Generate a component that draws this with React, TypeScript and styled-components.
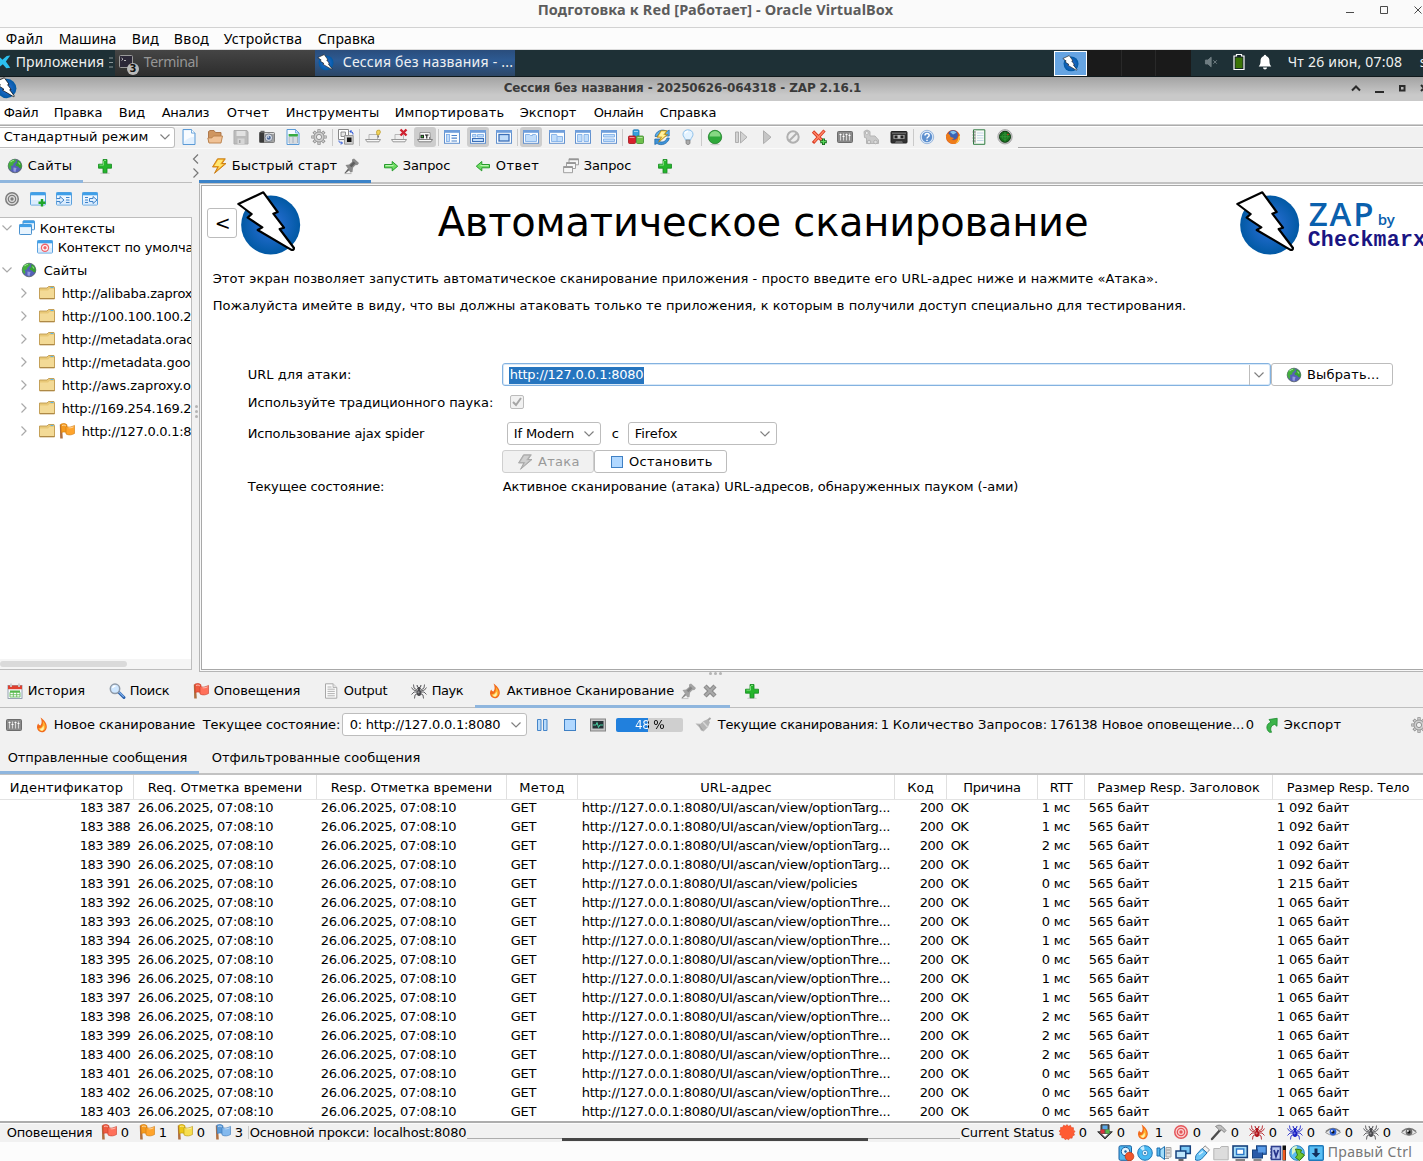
import React, { ReactNode, useLayoutEffect, useRef, useState } from "react";
import styled, { createGlobalStyle, css } from "styled-components";

const GlobalStyle = createGlobalStyle`
  * { box-sizing: border-box; }
  body { margin: 0; background: #f1f1f1; overflow: hidden; }
`;

const UI_FONT = '"DejaVu Sans", sans-serif';
const HOST_FONT = '"Noto Sans", "Open Sans", sans-serif';

/* ---------- text set to a fixed advance width ---------- */

const TextBox = styled.span<{ $w: number; $l: number; $size: number; $color: string; $bold?: boolean; $font: string; $weight?: number; $dy: number }>`
  display: block;
  flex: none;
  width: ${(p) => p.$w}px;
  margin-left: ${(p) => p.$l}px;
  padding-top: ${(p) => p.$dy}px;
  padding-left: 0.7px;
  font-family: ${(p) => p.$font};
  font-size: ${(p) => p.$size}px;
  font-weight: ${(p) => p.$weight ?? (p.$bold ? 700 : 400)};
  line-height: 1.2;
  color: ${(p) => p.$color};
  white-space: pre;
`;

type TProps = { w: number; l?: number; size?: number; color?: string; bold?: boolean; font?: string; weight?: number; dy?: number; children: string };

function T({ w, l = 0, size = 13, color = "#000", bold, font = UI_FONT, weight, dy = 0, children }: TProps) {
  const ref = useRef<HTMLSpanElement>(null);
  const [spacing, setSpacing] = useState(0);
  useLayoutEffect(() => {
    const el = ref.current;
    if (!el) return;
    el.style.letterSpacing = "0px";
    const natural = el.getBoundingClientRect().width;
    const next = children.length > 1 ? (w - 1.4 - natural) / children.length : 0;
    el.style.letterSpacing = `${next}px`;
    setSpacing(next);
  }, [w, children]);
  return (
    <TextBox $w={w} $l={l} $size={size} $color={color} $bold={bold} $font={font} $weight={weight} $dy={dy}>
      <span ref={ref} style={{ letterSpacing: spacing }}>{children}</span>
    </TextBox>
  );
}

/* ---------- icons ---------- */

const Svg = styled.svg<{ $l: number }>`
  display: block;
  flex: none;
  margin-left: ${(p) => p.$l}px;
  overflow: visible;
`;

const flag = (a: string, b: string, s: string) => (
  <>
    <path d="M.8 1.500h2L3.800 15.500H1.200z" fill="#b07040" />
    <path d="M1.800 1.200c2-1.200 4.500-1 6.200.6v8.200c-2-1.300-4-1.500-5.700-.2z" fill={a} stroke={s} strokeWidth=".6" />
    <path d="M7 3.200c2.500 1.500 5 1 8.500-.8v8.100c-2.500 1.600-6 2-8.500.5z" fill={b} stroke={s} strokeWidth=".6" />
    <path d="M3 2.600c1.500-.8 3-.5 4 .5M9.500 4.700c1.700.3 3.400 0 5-.8" stroke="#fff" strokeOpacity=".55" fill="none" />
  </>
);

const spider = (c: string) => (
  <>
    <g stroke={c} strokeWidth="1" fill="none" opacity=".85">
      <path d="M6 7L3 5 2.500 1.500M6 8L2.500 7 .5 4.500M6 9H3L.5 11.500M6.500 10.500L4 12l-.5 3.500M10 7l3-2 .5-3.500M10 8l3.500-1 2-2.500M10 9h3l2.500 2.500M9.500 10.500L12 12l.5 3.500" />
    </g>
    <ellipse cx="8" cy="9.800" rx="2.400" ry="3.100" fill={c} />
    <circle cx="8" cy="5.500" r="1.800" fill={c} />
    <path d="M6.500 4L6 2M9.500 4l.5-2" stroke={c} />
    <circle cx="7.500" cy="9.300" r="1.100" fill="#fff" opacity=".4" />
  </>
);

const eye = (c: string) => (
  <>
    <path d="M.5 8.500Q8 1 15.500 8.500 8 14 .5 8.500z" fill="#e6e6e6" stroke="#9a9a9a" />
    <path d="M.8 7.500Q8 1.300 15.200 7.500" stroke="#777" strokeWidth="1.100" fill="none" />
    <circle cx="8" cy="8" r="3.400" fill={c} />
    <circle cx="8" cy="8" r="1.500" fill="#111" />
    <circle cx="6.900" cy="6.900" r=".9" fill="#fff" />
  </>
);

const rings = (a: string, b: string) => (
  <>
    <circle cx="8" cy="8" r="7" fill={a} />
    <circle cx="8" cy="8" r="5.500" fill={b} />
    <circle cx="8" cy="8" r="4.300" fill={a} />
    <circle cx="8" cy="8" r="3" fill={b} />
    <circle cx="8" cy="8" r="1.700" fill={a} />
  </>
);

const frame = (inner: ReactNode) => (
  <>
    <rect x=".5" y="1.500" width="15" height="12.800" fill="#fafdff" stroke="#6391cd" />
    <rect x="0" y="1" width="16" height="2.800" fill="#6f9edb" />
    <g fill="#c1ddfa" stroke="#79a9e6" strokeWidth=".8">{inner}</g>
  </>
);

const win = (inner: ReactNode) => (
  <>
    <rect x=".5" y="1.500" width="15" height="12.500" rx=".8" fill="#eef7ff" stroke="#5aa1de" />
    <rect x=".5" y="1.500" width="15" height="2.800" fill="#3f9fe8" />
    <path d="M1 9h14v4.500H1z" fill="#cfe5fb" opacity=".6" />
    {inner}
  </>
);

const sliders = (
  <>
    <rect x=".5" y="2.500" width="15" height="11" rx="1" fill="#8a8a8a" stroke="#6c6c6c" />
    <path d="M3.500 4.500v7M6.500 4.500v7M9.500 4.500v7M12.500 4.500v7" stroke="#dcdcdc" strokeWidth=".9" />
    <path d="M2.500 5.500h2M5.500 7.500h2M8.500 5.500h2M11.500 6.500h2" stroke="#fff" strokeWidth="1.200" />
  </>
);

const gear = (
  <>
    <g stroke="#8c8c8c" strokeWidth="3.200">
      <path d="M8 .3v15.400M.3 8h15.400M2.600 2.600l10.800 10.800M13.400 2.600L2.600 13.400" />
    </g>
    <g stroke="#d0d0d0" strokeWidth="1.700">
      <path d="M8 1v14M1 8h14M3.200 3.200l9.600 9.600M12.800 3.200l-9.600 9.600" />
    </g>
    <circle cx="8" cy="8" r="5" fill="#cfcfcf" stroke="#8d8d8d" strokeWidth=".8" />
    <circle cx="8" cy="8" r="2.600" fill="#f1f1f1" stroke="#888" strokeWidth=".9" />
  </>
);

const globe = (
  <>
    <circle cx="8" cy="8" r="6.800" fill="#5560b8" stroke="#55606a" strokeWidth=".8" />
    <path d="M4 2.500C5.500 1.300 7.500 1.200 9 1.600L8.500 4 6.500 5.500 6 7.500 3.500 8 4.500 10l-.8 2.200C2 10.500 1.200 9 1.400 7 1.600 5 2.500 3.500 4 2.500z" fill="#43b03c" />
    <path d="M9.500 2.500l2.500.2c1.800 1.500 2.900 3.500 2.700 6-.4 1.300-1.200 2.100-2 1.600L11 8.500 9 8 8.500 6 10.500 5z" fill="#37a033" />
    <path d="M3.500 4c1-.9 2-1.500 3.500-1.800M11.500 4.500l1.500 2" stroke="#98e58a" strokeWidth="1.100" fill="none" />
    <path d="M6.500 9.500l3 .5-1 4-2-.8z" fill="#a4abe8" opacity=".8" />
  </>
);

const bolt = (a: string, b: string, s: string) => (
  <>
    <path d="M6.500.8h7.800L11 5.500h4L3.500 15.300 6.800 9H1.500z" fill={a} stroke={s} strokeWidth=".9" strokeLinejoin="round" />
    <path d="M7.200 1.800h5L9 6.300h3.500L6.500 11.500 8.500 8H3.300z" fill={b} />
  </>
);

const pin = (a: string, b: string) => (
  <>
    <path d="M1.500 15l4-5 1.500 1.500-4.500 3.700z" fill={b} />
    <path d="M2.500 7l3.500-.6 3-2.400V1.500L11 .5l5 4.500-1.500 2-2.200.2-2.300 2.600-.5 4.200-2 .5z" fill={a} />
    <path d="M6.500 7.500l4-4 2 1.700-4 4z" fill={b} />
    <path d="M1.500 15.600h7" stroke={b} opacity=".4" />
  </>
);

const flame = (
  <>
    <path d="M6.500.5c3 1.800 6.500 5.500 6.300 9.500-.2 3-2.200 5.300-5 5.300S3.200 13.300 3 10.600c-.1-1.600.5-3 1.300-4C4.800 8 5.500 8.500 6.500 8.500 8 6.500 8.100 3.500 6.500.5z" fill="#f26a1b" />
    <path d="M8.800 4c1.500 1.800 3 3.700 2.800 6.100-.2 2-1.600 3.900-3.600 3.900S4.700 12.800 4.500 11c1.500.4 3-.3 3.800-2.200.6-1.500.8-3 .5-4.800z" fill="#ffb02e" />
    <path d="M9.300 8.500c1 2 .8 5-1.200 5.200-1.800 0-2-1.500-2-2 1.500.2 2.700-1.200 3.200-3.200z" fill="#fff3b0" />
  </>
);

const plus = (
  <>
    <ellipse cx="8" cy="15.200" rx="5" ry=".8" fill="#999" opacity=".45" />
    <path d="M6 1.500h4v4.700h4.500v4H10v4.600H6v-4.600H1.500v-4H6z" fill="#25b52c" stroke="#128a1c" strokeWidth=".8" />
    <path d="M7 2.500h2M2.500 7.200h4V3" stroke="#8fe58a" strokeWidth=".8" fill="none" />
  </>
);

const arrow = (
  <>
    <path d="M1.500 6.500h7.700V3.500l5.500 4.700-5.500 4.700V9.800H1.500z" fill="#6ddc62" stroke="#279b2c" strokeLinejoin="round" />
    <path d="M2.500 7.600h8" stroke="#c5f7bd" />
  </>
);

const zapBolt = (
  <>
    <circle cx="807" cy="675" r="88.500" fill="url(#zapBall)" />
    <path d="M785 577L828 636 815 641 847 683 834 687 877 744Q877 752 868 749L768 690 782 682 738 653 750 642 710 612z" fill="#fff" stroke="#000" strokeWidth="6.500" strokeLinejoin="round" />
  </>
);

const hat = (
  <>
    <path d="M4 5.500h8.500v5H4z" fill="#eee" stroke="#aaa" strokeWidth=".8" />
    <path d="M.5 10.500h15l-1.500 2.300H2z" fill="#f7f7f7" stroke="#909090" strokeWidth=".9" />
  </>
);

const ICONS: Record<string, ReactNode> = {
  globe, gear, sliders, flame, plus, arrow,
  bolt: bolt("#f3a51c", "#ffe873", "#c77a10"),
  boltOff: bolt("#b5b5b5", "#d0d0d0", "#a5a5a5"),
  pin: pin("#8a8a8a", "#5f5f5f"),
  pinLight: pin("#a3a3a3", "#858585"),
  arrowLeft: <g transform="translate(16 0) scale(-1 1)">{arrow}</g>,
  doc: (
    <>
      <path d="M2 .5h8.500L14 4v11.500H2z" fill="#e2f0fe" stroke="#5b9ad6" />
      <path d="M3 1.500h7v3.500h3V8C9 8 5 10 3 13z" fill="#fff" opacity=".8" />
      <path d="M10.500.5V4H14" fill="#fff" stroke="#5b9ad6" strokeWidth=".8" />
    </>
  ),
  open: (
    <>
      <path d="M1.500 13V2.500L3 1.500h4l1.500 2H14V9z" fill="#cf9660" stroke="#a97142" strokeWidth=".9" />
      <path d="M.8 9L5 8.800 6.500 7h9L14 14H2z" fill="#f0c296" stroke="#b9804a" strokeWidth=".9" />
    </>
  ),
  save: (
    <>
      <path d="M1 1.500h13L15 3v12H1z" fill="#bcbcbc" stroke="#adadad" />
      <path d="M3.500 2h9v5h-9z" fill="#e2e2e2" />
      <path d="M4.500 9.500h7V15h-7z" fill="#d6d6d6" />
      <path d="M6 11h1.500v3H6z" fill="#a5a5a5" />
    </>
  ),
  camera: (
    <>
      <rect x=".5" y="3.500" width="15" height="10" rx="1" fill="#a3a3a3" stroke="#808080" />
      <path d="M.5 3h4.500v10.500H.5z" fill="#3a3a3a" />
      <rect x="1.500" y="1.800" width="4" height="2" fill="#666" />
      <path d="M6 4.500h9" stroke="#ddd" />
      <circle cx="9.800" cy="8.700" r="3.800" fill="#d5d9e2" stroke="#6b7380" strokeWidth=".8" />
      <circle cx="9.800" cy="8.700" r="2" fill="#4c6a9c" />
      <circle cx="9.200" cy="8" r=".8" fill="#fff" />
    </>
  ),
  sheet: (
    <>
      <path d="M2 .5h8.500L14 4v11.500H2z" fill="#f5faff" stroke="#5b9ad6" />
      <path d="M10.500.5V4H14z" fill="#cfe4f8" stroke="#5b9ad6" strokeWidth=".7" />
      <path d="M4 8h8.500v6H4zM4 10h8.500M4 12h8.500M8 8v6" fill="#fff" stroke="#9aa6b4" strokeWidth=".8" />
      <path d="M3.600 5h9.300v2.500H3.600z" fill="#39ab42" />
    </>
  ),
  swap: (
    <>
      <path d="M.5.500h10v10h-10z" fill="#fff" stroke="#888" />
      <path d="M3 3h4.500v4.500H3z" fill="#e6e6e6" stroke="#777" strokeWidth=".8" />
      <path d="M6.500 6.500h8.700v8.700H6.500z" fill="#cfcfcf" stroke="#999" />
      <path d="M9 8.500h4.500V13H9z" fill="#111" />
      <path d="M12 2.500c2 0 3 .5 3 3M12 2.500l1.500-1.500M12 2.500L13.500 4M1 11.500c0 2 1 2.500 3 2.500M4.500 14L3 12.500M4.500 14L3 15.500" stroke="#2a55d8" fill="none" />
    </>
  ),
  hatTip: (<>{hat}<path d="M12 1.500l2.500-.5 1 2-1.500 3h-2L11.500 3z" fill="#f1d35a" stroke="#b99621" strokeWidth=".7" /><path d="M12.500 6.500h1.500v2h-1.500z" fill="#777" /></>),
  hatX: (<>{hat}<path d="M9.500.5l6 6M15.500.5l-6 6" stroke="#cf2230" strokeWidth="2.400" /></>),
  hatOt: (
    <>
      <path d="M3 3.500h10l.5 7h-11z" fill="#fafafa" stroke="#888" strokeWidth=".8" />
      <path d="M.5 10.500h15l-1.500 2.300H2z" fill="#f7f7f7" stroke="#808080" />
      <rect x="3.500" y="5.800" width="3.500" height="3.500" fill="#222" />
      <rect x="4.500" y="6.800" width="1.500" height="1.500" fill="#39c03b" />
      <path d="M8 6h3.500M9.800 6v3.500M12 9h1" stroke="#111" strokeWidth="1.100" />
    </>
  ),
  lay1: frame(<><rect x="2.500" y="5.500" width="3" height="7" /><path d="M7.500 6.500H13M7.500 9.200H13M7.500 12H13" stroke="#4d83c9" strokeWidth="1.200" /></>),
  lay2: frame(<><path d="M2.500 5.500h3.500v2.500H2.500zM7.500 5.500h6v2.500h-6z" /><path d="M2.500 9.500h11v3h-11z" stroke="#3b6fb8" strokeWidth="1.100" /></>),
  lay3: frame(<rect x="3" y="5.500" width="10" height="6.500" stroke="#3b6fb8" strokeWidth="1.300" />),
  lay4: frame(<path d="M2.500 5.500h4l1 1h2v-1h3l1 1v6h-11z" />),
  lay5: frame(<path d="M2.500 5.500h5l.8 2h5.200v5h-11zM8 7.500v5" />),
  lay6: frame(<path d="M2.500 5.500h4.500v7H2.500zM9 5.500h4.500v7H9z" />),
  lay7: frame(<path d="M2.500 5.500h11v2.500h-11zM2.500 10h11v2.500h-11z" />),
  blocks: (
    <>
      <rect x="5" y=".8" width="6" height="6.500" rx="1" fill="#35a0dd" stroke="#1f79b2" strokeWidth=".8" />
      <rect x=".5" y="7" width="7" height="7.500" rx="1" fill="#d8202b" stroke="#9f1219" strokeWidth=".8" />
      <rect x="8.500" y="7" width="7" height="7.500" rx="1" fill="#6dc04b" stroke="#3c8a2a" strokeWidth=".8" />
      <path d="M6 2.500h4M1.500 8.500h5M9.500 8.500h5" stroke="#fff" opacity=".5" />
    </>
  ),
  update: (
    <>
      <path d="M3 14.500L.8 15.500V10H6l-1.500 2c3 2 7 1 8.500-3h2.300c-1 5.500-7.500 8.500-12.300 5.500z" fill="#3d93d8" stroke="#1c64a5" strokeWidth=".7" />
      <path d="M13 2.500l2.200-1.500v6H10l2-2C9 2.500 5 3.500 3.500 7.500H1C1.500 2.500 8-1 13 2.500z" fill="#5aaee8" stroke="#1c64a5" strokeWidth=".7" />
      <g transform="translate(1.800 1) scale(.8)">{bolt("#efc53a", "#fff1a0", "#a88018")}</g>
    </>
  ),
  bulb: (
    <>
      <path d="M8 .8c3 0 5 2 5 4.500 0 2.300-1.800 3.300-2.500 5.700h-5C4.800 8.600 3 7.600 3 5.300 3 2.800 5 .8 8 .8z" fill="#e4f3ff" stroke="#8dc0ea" />
      <path d="M5 4.500C5.500 3 6.500 2.200 8 2.200" stroke="#fff" strokeWidth="1.500" fill="none" />
      <path d="M6 11h4v3.500L8 15.800l-2-1.300z" fill="#aaa" stroke="#777" strokeWidth=".7" />
    </>
  ),
  ball: (
    <>
      <circle cx="8" cy="8" r="6.700" fill="#2fa93a" stroke="#1f7d29" strokeWidth=".8" />
      <path d="M2.500 7.500a5.500 5.500 0 0 1 11 0z" fill="#86d883" />
      <ellipse cx="8" cy="15.500" rx="5" ry=".7" fill="#999" opacity=".4" />
    </>
  ),
  step: <path d="M2.500 3v10.500h3V3zM7.500 2.500v11.500L14 8.200z" fill="#d2d2d2" stroke="#a8a8a8" strokeWidth=".9" />,
  play: <path d="M4.500 1.800v12.800L12 8.200z" fill="#c6c6c6" stroke="#a8a8a8" strokeWidth=".9" />,
  ban: (<><circle cx="8" cy="8" r="5.700" fill="#eee" stroke="#b0b0b0" strokeWidth="2" /><path d="M4 12l8-8" stroke="#b0b0b0" strokeWidth="2" /></>),
  redX: (
    <>
      <path d="M2 2.500l11 11M13.500 1.500L2 14" stroke="#d8391f" strokeWidth="3.200" />
      <path d="M2.500 3l10 10M13 2L3 13" stroke="#ff8468" strokeWidth="1.500" />
      <path d="M12.500 9.500v6.500M9.300 12.700h6.500" stroke="#14691b" strokeWidth="3" />
      <path d="M12.500 10.200v5M10 12.700h5" stroke="#58d75a" strokeWidth="1.200" />
    </>
  ),
  turtle: (
    <>
      <path d="M1 2.500q3-3 6 0v4.500h5l3.500 4v3.500h-12V9l-2-.5z" fill="#cacaca" stroke="#b5b5b5" />
      <circle cx="3.800" cy="4" r="1.500" fill="#efefef" stroke="#aaa" strokeWidth=".7" />
      <circle cx="6" cy="13" r="1.800" fill="#ddd" stroke="#aaa" strokeWidth=".8" />
      <circle cx="12.500" cy="13" r="1.800" fill="#ddd" stroke="#aaa" strokeWidth=".8" />
    </>
  ),
  cassette: (
    <>
      <rect x="0" y="2.500" width="16" height="11.500" rx=".8" fill="#333" stroke="#222" />
      <path d="M1 4.200h14" stroke="#8a8a8a" strokeWidth=".8" />
      <rect x="2.500" y="6" width="11" height="3.800" fill="#bdbdbd" />
      <rect x="3.500" y="6.500" width="3" height="2.800" fill="#222" /><rect x="9.500" y="6.500" width="3" height="2.800" fill="#222" />
      <path d="M4 14l1-2h6l1 2z" fill="#666" />
    </>
  ),
  help: (
    <>
      <circle cx="8" cy="8" r="6.700" fill="#dce9f8" stroke="#86aad6" strokeWidth=".8" />
      <circle cx="8" cy="8" r="5.200" fill="#5e90cf" />
      <path d="M6 6.500c0-2.800 4.200-2.600 4.200-.2C10.200 8 8 8 8 9.500M8 10.700v1.400" stroke="#fff" strokeWidth="1.500" fill="none" />
    </>
  ),
  firefox: (
    <>
      <circle cx="8" cy="8" r="7" fill="#d9541b" />
      <circle cx="8" cy="6" r="4.800" fill="#3a62b4" />
      <path d="M5 3c2-1.500 5-1.300 6.500.8L8 5.500z" fill="#86c4ee" />
      <path d="M.9 6c0 5 3.500 9 8 9 3.800-.4 6.300-3.500 6.100-8.500l-1.500-2.800.2 3.800C12.500 10.500 9 12.500 6 10.500c1.500 0 2.500-.6 2.800-1.600L5.500 8 5 6 3 4.500z" fill="#ee7d1b" />
      <path d="M15 6.500c.3 4-1.500 7-4.500 8 2-2 3-4 3-7z" fill="#ffd24a" />
    </>
  ),
  notebook: (
    <>
      <path d="M2.500.8h11.300v14.500H2.500z" fill="#f8faf8" stroke="#2f7d42" />
      <path d="M3 1.500h2v13H3z" fill="#cbd3cb" />
      <path d="M1.500 3h3M1.500 6h3M1.500 9h3M1.500 12h3" stroke="#666" strokeWidth=".8" />
      <path d="M6 4h6.500M6 6.500h6.500M6 9h6.500M6 11.500h6.500" stroke="#b8cfe2" strokeWidth=".8" />
    </>
  ),
  radar: (
    <>
      <circle cx="8" cy="7.800" r="7.200" fill="#c6c6c6" stroke="#9a9a9a" strokeWidth=".8" />
      <circle cx="8" cy="7.800" r="5.500" fill="#15701c" stroke="#0f3a12" />
      <path d="M8 3v9.600M3.200 7.800h9.600" stroke="#3aa043" strokeWidth=".8" />
      <circle cx="8" cy="7.800" r="2.800" fill="none" stroke="#2f9137" strokeWidth=".8" />
      <circle cx="11" cy="5.500" r=".8" fill="#e22" />
    </>
  ),
  target: rings("#7c7c7c", "#e0e0e0"),
  targetRed: rings("#e4555a", "#fbd6d4"),
  winAdd: win(<path d="M12 8v7.500M8.500 11.800h7" stroke="#1fa529" strokeWidth="2.400" />),
  winIn: win(<path d="M.5 7.500h3.500V5.500L8 9l-4 3.500v-2H.5M10 6.500h3.500M10 9h3.500M10 11.500h3.500" stroke="#4083c8" fill="#dff0ff" />),
  winOut: win(<path d="M3 6.500h3M3 9h3M3 11.500h3M7.500 7.500H11V5.500L15 9l-4 3.500v-2H7.500z" stroke="#4083c8" fill="#dff0ff" />),
  winTarget: win(<><circle cx="8" cy="8.800" r="4.200" fill="#f0656a" /><circle cx="8" cy="8.800" r="2.900" fill="#fff" /><circle cx="8" cy="8.800" r="1.700" fill="#f0656a" /></>),
  contexts: (
    <>
      <rect x="4" y=".8" width="11.500" height="9" rx=".7" fill="#e8f4fe" stroke="#4b92cf" />
      <rect x="4" y=".8" width="11.500" height="2.400" fill="#3f9fe8" />
      <rect x=".5" y="4.500" width="12" height="10" rx=".7" fill="#e8f4fe" stroke="#4b92cf" />
      <rect x=".5" y="4.500" width="12" height="2.600" fill="#3f9fe8" />
    </>
  ),
  folder: (
    <>
      <path d="M.5 3H8l1.500-1.500H15l.5 1v11.300H.5z" fill="#e8c877" stroke="#c09a4e" strokeWidth=".9" />
      <path d="M1 5.500h8l1.500-1.500H15v9.300H1z" fill="#f3da96" />
      <path d="M11.500 2.500h3" stroke="#5bb5e8" />
      <path d="M1 13.600h14.500" stroke="#a98442" />
    </>
  ),
  flagRed: flag("#ef5a40", "#ff705a", "#c93c28"),
  flagOrange: flag("#f59a1e", "#ffa42c", "#d07a0c"),
  flagYellow: flag("#ecc718", "#f7de4e", "#b8940a"),
  flagBlue: flag("#5b9bd8", "#83b9ee", "#3a77b8"),
  calendar: (
    <>
      <rect x="1" y="2.500" width="14" height="13" fill="#f4f8fb" stroke="#8090a0" strokeWidth=".8" />
      <path d="M1 2.500h14v3.700H1z" fill="#e0402f" />
      <path d="M4 .5v3.500M12 .5v3.500" stroke="#ccc" strokeWidth="1.800" />
      <path d="M3 9.300h10v4.700H3zM3 11.700h10M6.300 9.300V14M9.700 9.300V14" fill="#fff" stroke="#55b84c" strokeWidth=".8" />
      <path d="M3 7.500h10v1.800H3z" fill="#55b84c" />
    </>
  ),
  search: (
    <>
      <path d="M9 8.500l6 6" stroke="#2c62ad" strokeWidth="3" strokeLinecap="round" />
      <path d="M10 9l4.800 4.800" stroke="#7fb0ea" strokeWidth="1.200" />
      <circle cx="6" cy="5.800" r="4.700" fill="#cfe7ff" stroke="#8f9aa8" strokeWidth="1.500" />
      <path d="M3.500 5C4 3.500 5 3 6.500 3" stroke="#fff" strokeWidth="1.300" fill="none" />
    </>
  ),
  output: (
    <>
      <path d="M2.500.8H10L13.800 4.500v10.700H2.500z" fill="#fafafa" stroke="#a8a8a8" />
      <path d="M10 .8v3.700h3.800" fill="#e3e3e3" stroke="#a8a8a8" strokeWidth=".8" />
      <path d="M4.500 4h4M4.500 6.200h7.300M4.500 8.400h7.300M4.500 10.600h7.300M4.500 12.800h7.300" stroke="#aaa" strokeWidth=".9" />
    </>
  ),
  spider: spider("#4a4a4e"),
  spiderRed: spider("#b2141b"),
  spiderBlue: spider("#1b22c5"),
  eyeBlue: eye("#2f62d8"),
  eyeGrey: eye("#6b6b6b"),
  stack: (
    <g fill="#f6f6f6" stroke="#979797" strokeWidth=".9">
      <path d="M6 .8h9.500v6H6z" /><path d="M3.500 4.500h9v6h-9z" /><path d="M.6 8.500h8.900v6.200H.6z" />
      <path d="M.6 9.300h9M3.500 5.300h9M6 1.600h9.500" strokeWidth="1.500" />
    </g>
  ),
  closeX: (
    <>
      <path d="M3 3l10 10M13 3L3 13" stroke="#8a8a8a" strokeWidth="4.400" />
      <path d="M3.500 3.500l9 9M12.500 3.500l-9 9" stroke="#a9a9a9" strokeWidth="2.200" />
    </>
  ),
  pause: <path d="M3.500 2.500H7v11H3.500zM9.500 2.500H13v11H9.500z" fill="#b8dbfb" stroke="#4585c9" />,
  stop: <rect x="2.500" y="2.500" width="11" height="11" fill="#b1d8ff" stroke="#3f80c4" />,
  monitor: (
    <>
      <rect x=".5" y="2" width="15" height="12" fill="#c4c4c4" stroke="#858585" />
      <rect x="2.500" y="4" width="11" height="7.500" fill="#253236" />
      <path d="M3 8h3l1-2.500 1.500 5L9.800 8H13" stroke="#4fe3b0" strokeWidth=".9" fill="none" />
    </>
  ),
  broom: (
    <>
      <path d="M15.500 1l-4 3.500" stroke="#a5a5a5" strokeWidth="2" />
      <path d="M.5 6.500l5 .3 3-2.800 3.500-1.500 3 2.500-2 5L8.500 14.500 6 13.500 4 10z" fill="#b5b5b5" />
      <path d="M8 5l4.500 5" stroke="#d8d8d8" strokeWidth="1.500" />
      <path d="M4 8l3.500 5" stroke="#9d9d9d" />
    </>
  ),
  exportUp: <path d="M5.500 15.300C1.500 12.500 2 6.500 7 5.200L5 2.500l8.200-1.200-.2 8-2.300-1.900c-3.500 1-5 3.600-3.200 7.900z" fill="#3cb44a" stroke="#1d8a30" strokeWidth=".8" />,
  badge: <path d="M8 .6l1.500 1.700 2-1 .8 2.200 2.200.2-.1 2.200 1.700 1.500-1.400 1.700.8 2-2 .9-.4 2.200-2.200-.1-1.300 1.700L8 14.700l-1.800 1-1.200-1.800-2.200-.1-.2-2.200-2-.9.800-2L.1 7l1.600-1.400L1.500 3.500l2.200-.2.900-2.100 2 .9z" fill="#ff5b33" stroke="#d93a16" strokeWidth=".5" />,
  down: (
    <>
      <path d="M4 .8h8v7h3.300L8 15 .7 7.800H4z" fill="#555" stroke="#333" />
      <rect x="5.500" y="1.500" width="5" height="3.700" fill="#58a7e8" />
      <path d="M3.500 5.500h4V9.500h-4z" fill="#d9343d" />
      <path d="M8.500 5.500h4v4h-4z" fill="#57b84a" />
      <path d="M5 10h6L8 13z" fill="#fff" />
    </>
  ),
  hammer: (
    <>
      <path d="M1 15L10 5" stroke="#4d4d4d" strokeWidth="2.400" strokeLinecap="round" />
      <path d="M4.500 2.500C7 .5 9.500 1 11 2.300l4 4.200-1.800 2-2.700-2.700L8.500 6.500 7 4.500z" fill="#bdbdbd" stroke="#777" strokeWidth=".8" />
    </>
  ),
  hdd: (
    <>
      <rect x="1" y=".8" width="12.500" height="14.500" rx="1.500" fill="#4fb8f0" stroke="#1a5f9f" />
      <circle cx="7.500" cy="6.500" r="4.200" fill="#e3f5ff" stroke="#1a5f9f" />
      <circle cx="7.500" cy="6.500" r="1.200" fill="#1a5f9f" />
      <circle cx="11.500" cy="11.500" r="4.300" fill="#f0552c" stroke="#b63410" strokeWidth=".7" />
    </>
  ),
  disc: (
    <>
      <circle cx="8" cy="8" r="7.300" fill="#48b9f2" stroke="#2176b5" />
      <path d="M8 8L3 3a7 7 0 0 1 4-2z" fill="#c9edff" />
      <circle cx="8" cy="8" r="2.800" fill="#e8f7ff" stroke="#2176b5" strokeWidth=".7" />
      <circle cx="8" cy="8" r="1.100" fill="#2176b5" />
    </>
  ),
  audio: (
    <>
      <path d="M1 3h3v8H1z" fill="#57b7ec" stroke="#1d6fae" />
      <path d="M4 5l4.500-3.500v13L4 11z" fill="#a3ddfa" stroke="#1d6fae" />
      <path d="M10 2.500h5V12h-5z" fill="#dedede" stroke="#a5a5a5" />
      <path d="M10.500 5H14M10.500 8H14M9 13.500h4" stroke="#999" />
    </>
  ),
  net: (
    <>
      <rect x="5.500" y="1" width="9.800" height="7.500" fill="#7ac8f5" stroke="#17427e" strokeWidth="1.500" />
      <rect x="1" y="6" width="9.800" height="7" fill="#bfe6fc" stroke="#17427e" strokeWidth="1.500" />
      <path d="M3.500 15h5" stroke="#333" strokeWidth="1.500" />
    </>
  ),
  usb: (
    <>
      <path d="M11 .8l4.500 4-2.500 3-4.500-4z" fill="#f1f1f1" stroke="#777" strokeWidth=".8" />
      <path d="M8 3.500l5 4.500-5.500 6c-2 1.500-4 1.500-6 1 0-2 0-4 1-5.500z" fill="#6cc6f6" stroke="#1f72b3" />
      <path d="M5 9.500l4-3" stroke="#d9f1ff" strokeWidth="1.500" />
    </>
  ),
  shared: <path d="M.8 3.500h6l1.500-2h6.900v13.300H.8z" fill="#dcdcdc" stroke="#b5b5b5" />,
  display: (
    <>
      <rect x="1" y="1" width="14.300" height="11.500" fill="#a8def9" stroke="#17427e" strokeWidth="1.600" />
      <rect x="4.500" y="4" width="7.300" height="5.500" fill="#fff" stroke="#2a77c9" strokeWidth="1.400" />
      <path d="M3.500 15h9.500" stroke="#666" strokeWidth="1.600" />
    </>
  ),
  displays: (
    <>
      <rect x="5.500" y=".8" width="9.800" height="8.500" fill="#3572c2" stroke="#17427e" />
      <rect x="1.500" y="5" width="10" height="8" fill="#2a5aa8" stroke="#17427e" />
      <path d="M7 2h7.500v5.500H7z" fill="#5b9de8" />
      <path d="M2.500 15h8" stroke="#666" strokeWidth="1.500" />
    </>
  ),
  cpu: (
    <>
      <rect x="1.500" y="1.500" width="9" height="13" fill="#b9c7f0" stroke="#30408f" strokeWidth="1.600" />
      <path d="M4 5l2 6.500L8.300 5" stroke="#27348b" strokeWidth="1.800" fill="none" />
      <path d="M0 4h1M0 7h1M0 10h1M0 13h1" stroke="#30408f" />
      <rect x="12.500" y=".5" width="3.500" height="15" fill="#111" />
      <rect x="13" y="5" width="2.500" height="10" fill="#f25a1f" />
    </>
  ),
  sync: (
    <>
      <circle cx="8" cy="8" r="7.300" fill="#5bbcf0" stroke="#2c7fb8" />
      <path d="M3 3c2-2 5-2 5-2l-1 5-4 4z" fill="#d8f4c9" />
      <path d="M6.500 4l6 1-1 2.500 4 2.500-5 5.500-4-3 2-2.500z" fill="#6fc52e" stroke="#33790f" />
    </>
  ),
  keyDown: (
    <>
      <rect x=".8" y=".8" width="14.500" height="14.500" rx="1" fill="#58bff5" stroke="#1f79ba" strokeWidth="1.400" />
      <path d="M6.500 3.500h3V8h2.800L8 12.500 3.700 8h2.800z" fill="#12305e" />
    </>
  ),
  xfce: <path d="M0 2c2 0 3.500 1.500 5 3.500L10 1l4-.5-5 7 5 7-4.500.5-4-4.500L0 15V10l2-2-2-2.500z" fill="#2cc0f0" />,
  terminal: (
    <>
      <rect x=".5" y="1.500" width="13" height="12" rx="1" fill="#2c2838" stroke="#9a9a9a" />
      <path d="M2.500 4l1.500 1.200L2.500 6.500M5 6.500h2" stroke="#ddd" strokeWidth=".8" fill="none" />
    </>
  ),
  volume: <path d="M.5 5.800h2.800L7 2.500v11L3.300 10.200H.5zM9.500 6l4 4M13.500 6l-4 4" fill="#6f7d82" stroke="#6f7d82" strokeWidth="1.100" />,
  battery: (<><path d="M5.500.5h5V2H13v13.500H3V2h2.500z" fill="#142227" stroke="#fff" strokeWidth="1.200" /><rect x="4.500" y="3.600" width="7" height="10.500" fill="#3b7407" /></>),
  bell: <path d="M8 .8c1 0 1.200.8 1.200 1.300C12 3 12.500 5 12.500 8c0 2 .8 3.200 1.800 4.500H1.700C2.700 11.200 3.500 10 3.500 8c0-3 .5-5 3.300-5.900C6.800 1.600 7 .8 8 .8zM6 13.500h4c0 2.500-4 2.500-4 0z" fill="#fff" />,
};

function Icon({ n, l = 0, s = 16 }: { n: string; l?: number; s?: number }) {
  return <Svg $l={l} width={s} height={s} viewBox="0 0 16 16">{ICONS[n]}</Svg>;
}

function ZapLogo({ w, l = 0 }: { w: number; l?: number }) {
  return (
    <Svg $l={l} width={w} height={(w * 198) / 201} viewBox="700 570 201 198">
      <defs>
        <radialGradient id="zapBall"><stop offset="0" stopColor="#2f72dc" /><stop offset="1" stopColor="#0159a4" /></radialGradient>
      </defs>
      {zapBolt}
    </Svg>
  );
}

function Chevron({ dir = "down", l = 0, color = "#808080" }: { dir?: "down" | "right" | "left"; l?: number; color?: string }) {
  const d = dir === "down" ? "M.5 2.500L5 7l4.500-4.500" : dir === "right" ? "M2.500.5L7 5l-4.500 4.500" : "M7 .5L2.500 5 7 9.500";
  return <Svg $l={l} width="10" height="10" viewBox="0 0 10 10"><path d={d} fill="none" stroke={color} strokeWidth="1.200" /></Svg>;
}

/* ---------- layout parts ---------- */

const Screen = styled.div`
  width: 1423px; height: 1161px; overflow: hidden;
  display: flex; flex-direction: column; background: #f1f1f1;
`;
const Bar = styled.div<{ $h: number; $bg?: string; $pb?: number }>`
  flex: none; display: flex; align-items: center; overflow: hidden;
  height: ${(p) => p.$h}px; background: ${(p) => p.$bg ?? "transparent"}; padding-bottom: ${(p) => p.$pb ?? 0}px;
`;
const HostTitle = styled(Bar)`border-bottom: 1px solid #d2d2d2; padding-bottom: 8px;`;
const HostMenu = styled(Bar)`border-bottom: 1px solid #dcdcdc; padding-top: 1px;`;
const Panel = styled(Bar)`border-bottom: 1px solid #10191c; align-items: stretch;`;
const PanelPart = styled.div<{ $w: number; $bg?: string }>`
  flex: none; display: flex; align-items: center; position: relative; padding-bottom: 2px;
  width: ${(p) => p.$w}px; background: ${(p) => p.$bg ?? "transparent"};
`;
const TaskCount = styled.span`
  position: absolute; left: 12px; top: 13px; width: 12px; height: 12px; border-radius: 50%;
  background: #b9b9b9; color: #111; font: bold 10px/12px ${UI_FONT}; text-align: center;
`;
const PagerCurrent = styled(PanelPart)`border: 1px solid #fff; justify-content: center; margin-top: 1px; height: 25px; padding: 0;`;
const PagerCell = styled(PanelPart)`border-right: 1px solid #292929;`;
const WindowTitle = styled(Bar)`background: linear-gradient(#a3a3a3, #c9c9c9 75%); padding-bottom: 2px;`;
const MenuBar = styled(Bar)`border-bottom: 1px solid #cfcfcf;`;
const ToolbarRow = styled(Bar)`border-top: 1px solid #acacac; box-shadow: inset 0 1px #fff, inset 0 -1px #fafafa; padding-bottom: 1px;`;
const ToolbarTail = styled.div`flex: 1; align-self: stretch; border-bottom: 1px solid #a6a6a6;`;
const Combo = styled.div<{ $w: number; $h?: number; $l?: number }>`
  flex: none; display: flex; align-items: center; background: #fff;
  width: ${(p) => p.$w}px; height: ${(p) => p.$h ?? 23}px; margin-left: ${(p) => p.$l ?? 0}px;
  border: 1px solid #bdbdbd; border-radius: 3px;
`;
const ModeCombo = styled(Combo)`border-left: 0; border-radius: 0 3px 3px 0; margin-right: 1px;`;
const ToolCell = styled.div<{ $w?: number; $on?: boolean }>`
  flex: none; display: flex; justify-content: center; align-items: center;
  width: ${(p) => (p.$w ?? 26) - 4}px; height: 20px; margin: 0 2px; border-radius: 3px;
  background: ${(p) => (p.$on ? "#cdcdcd" : "transparent")};
`;
const Divider = styled.div<{ $h?: number; $l?: number }>`
  flex: none; width: 1px; height: ${(p) => p.$h ?? 17}px; margin-left: ${(p) => p.$l ?? 0}px; background: #cacaca;
`;
const Workspace = styled.div`flex: none; display: flex; height: 523px;`;
const Sidebar = styled.div`flex: none; width: 192px; display: flex; flex-direction: column;`;
const TabBar = styled.div<{ $h: number }>`
  flex: none; display: flex; align-items: stretch; height: ${(p) => p.$h}px;
  box-shadow: inset 0 -1px #bebebe;
`;
const ThickTabBar = styled(TabBar)`box-shadow: inset 0 -2px #c2c2c2; padding-bottom: 1px;`;
const Tab = styled.div<{ $w: number; $mark?: string; $pb?: number }>`
  flex: none; display: flex; align-items: center; width: ${(p) => p.$w}px; padding-bottom: ${(p) => p.$pb ?? 0}px;
  ${(p) => p.$mark && css`box-shadow: inset 0 -3px ${p.$mark};`}
`;
const Tree = styled.div`
  flex: none; height: 453px; background: #fff; border: 1px solid #bdbdbd; border-left: 0;
  display: flex; flex-direction: column; overflow: hidden;
`;
const TreeRow = styled.div<{ $h?: number; $gap?: number }>`
  flex: none; display: flex; align-items: center; overflow: hidden;
  height: ${(p) => p.$h ?? 23}px; margin-top: ${(p) => p.$gap ?? 0}px;
  > svg { margin-top: -1px; }
`;
const ScrollTrack = styled.div`margin-top: auto; height: 10px; padding: 2px 0; background: #f5f5f5;`;
const ScrollThumb = styled.div`width: 127px; height: 6px; border-radius: 3px; background: #dadada;`;
const Splitter = styled.div`flex: none; width: 7px; display: flex; flex-direction: column; align-items: center;`;
const SplitArrows = styled.div`height: 34px; padding: 5px 0 0 1px; display: flex; flex-direction: column; gap: 4px;`;
const Grip = styled.div<{ $row?: boolean }>`
  display: flex; flex-direction: ${(p) => (p.$row ? "row" : "column")}; gap: 2px;
`;
const SplitGrip = styled(Grip)`margin: 222px 0 0 2px;`;
const RowGrip = styled(Grip)`margin: 0 auto; padding-left: 8px; height: 4px;`;
const Dot = styled.i`width: 3px; height: 3px; border-radius: 50%; background: #b4b4b4;`;
const Main = styled.div`flex: 1; display: flex; flex-direction: column; overflow: hidden;`;
const PageFrame = styled.div`
  flex: 1; border-left: 1px solid #b5b5b5; border-bottom: 1px solid #b5b5b5;
  padding: 1px 0 1px 1px; display: flex; background: #f8f8f8;
`;
const Page = styled.div`
  flex: 1; min-width: 0; background: #fff; border: 1px solid #a8a8a8; border-right: 0; overflow: hidden;
`;
const Hero = styled.div`display: flex; height: 76px; align-items: flex-start; padding-top: 4px;`;
const BackButton = styled.button`
  flex: none; width: 30px; height: 30px; margin: 18px 0 0 5px; padding: 0; display: flex; align-items: center;
  background: #fff; border: 1px solid #bcbcbc; border-radius: 3px;
`;
const Brand = styled.div`display: flex; flex-direction: column; margin-left: 7px; padding-top: 4px; flex: none;`;
const BrandTop = styled.div`display: flex; align-items: flex-start; height: 34px;`;
const FormRow = styled.div<{ $h: number }>`
  display: flex; align-items: center; height: ${(p) => p.$h}px;
  > ${Combo}, > button { margin-top: -1px; padding-top: 1px; }
`;
const UrlCombo = styled(Combo)`border-color: #83b2e0; box-shadow: inset 0 0 0 1px #d9e9f8;`;
const Selection = styled.div`margin-left: 6px; height: 17px; width: 135px; background: #2675bf; display: flex; align-items: center;`;
const UrlArrow = styled.div`margin-left: auto; width: 21px; height: 20px; border-left: 1px solid #bdbdbd; display: flex; align-items: center;`;
const Check = styled.div`
  flex: none; margin: -2px 0 0 16px; width: 14px; height: 14px; border: 1px solid #bcbcbc; border-radius: 2px; background: #f1f1f1;
`;
const Button = styled.button<{ $w: number; $off?: boolean }>`
  flex: none; width: ${(p) => p.$w}px; height: 23px; padding: 0; display: flex; align-items: center;
  background: ${(p) => (p.$off ? "#f1f1f1" : "#fff")}; border: 1px solid ${(p) => (p.$off ? "#cfcfcf" : "#bcbcbc")}; border-radius: 3px;
`;
const Progress = styled.div`
  flex: none; width: 67px; height: 14px; margin-left: 10px; border-radius: 2px; display: flex; align-items: center; overflow: hidden;
  background: linear-gradient(90deg, #2180dd 32px, #cfcfcf 32px);
`;
const ProgressText = styled.span`
  display: block; width: 30px; margin-left: 19px; font: 12px/14px ${UI_FONT}; letter-spacing: -0.3px; white-space: pre;
  background: linear-gradient(90deg, #fff 13px, #000 13px); background-clip: text; color: transparent;
`;
const Table = styled.div`
  flex: none; height: 346px; overflow: hidden; background: #fff;
  display: flex; flex-direction: column;
`;
const COLS = "134px 183px 190px 71px 317px 52px 91px 47px 188px 150px";
const HeadRow = styled.div`flex: none; display: grid; grid-template-columns: ${COLS}; height: 25px; border-bottom: 1px solid #e3e3e3; background: #fff;`;
const HeadCell = styled.div`
  display: flex; align-items: center; justify-content: center; border-right: 1px solid #e0e0e0; padding-top: 1px;
  &:last-child { border-right: 0; }
`;
const Body = styled.div`flex: none; margin-top: -2px;`;
const Row = styled.div`display: grid; grid-template-columns: ${COLS}; height: 19px; align-items: center;`;
const Cell = styled.div<{ $end?: boolean }>`
  display: flex; justify-content: ${(p) => (p.$end ? "flex-end" : "flex-start")};
  padding: 0 ${(p) => (p.$end ? 3 : 0)}px 0 ${(p) => (p.$end ? 0 : 3)}px;
`;
const StatusBar = styled(Bar)`border-top: 2px solid #adadad; box-shadow: inset 0 1px #fafafa;`;
const StatusFill = styled.div`
  flex: 1; align-self: flex-end; height: 3px; border-top: 1px solid #adadad;
  display: flex; justify-content: flex-start;
`;
const Handle = styled.div`margin-left: 95px; width: 306px; height: 3px; margin-top: -1px; background: #464646;`;
const HostStatus = styled(Bar)`border-top: 1px solid #f1f1f1; padding-top: 2px;`;

/* ---------- data ---------- */

const TOOLS: string[] = [
  "doc", "open", "save", "camera", "sheet", "gear", "|", "swap", "|", "hatTip", "hatX", "*hatOt", "|",
  "lay1", "*lay2", "lay3", "|", "*lay4", "lay5", "lay6", "lay7", "|", "blocks", "update", "bulb", "|",
  "ball", "step", "play", "ban", "redX", "sliders", "turtle", "cassette", "|", "help", "firefox", "notebook", "radar",
];

const SITES: [string, number][] = [
  ["http://alibaba.zaprox", 132], ["http://100.100.100.2", 131], ["http://metadata.orac", 133],
  ["http://metadata.goo", 130], ["http://aws.zaproxy.or", 136], ["http://169.254.169.2", 131],
];

const HEADERS: [string, number][] = [
  ["Идентификатор", 115], ["Req. Отметка времени", 156], ["Resp. Отметка времени", 163], ["Метод", 47], ["URL-адрес", 73],
  ["Код", 28], ["Причина", 59], ["RTT", 24], ["Размер Resp. Заголовок", 164], ["Размер Resp. Тело", 124],
];

const TARG = "optionTarg...", THRE = "optionThre...";
const MESSAGES: [number, string, number, string][] = [
  [387, TARG, 1, "1 092"], [388, TARG, 1, "1 092"], [389, TARG, 2, "1 092"], [390, TARG, 1, "1 092"], [391, "policies", 0, "1 215"],
  [392, THRE, 1, "1 065"], [393, THRE, 0, "1 065"], [394, THRE, 1, "1 065"], [395, THRE, 0, "1 065"], [396, THRE, 1, "1 065"],
  [397, THRE, 1, "1 065"], [398, THRE, 2, "1 065"], [399, THRE, 2, "1 065"], [400, THRE, 2, "1 065"], [401, THRE, 0, "1 065"],
  [402, THRE, 0, "1 065"], [403, THRE, 0, "1 065"],
];

const SCAN_STATUS: [string, string][] = [
  ["badge", "0"], ["down", "0"], ["flame", "1"], ["targetRed", "0"], ["hammer", "0"], ["spiderRed", "0"], ["spiderBlue", "0"], ["eyeBlue", "0"], ["spider", "0"],
];

const HOST_ICONS = ["hdd", "disc", "audio", "net", "usb", "shared", "display", "displays", "cpu", "sync", "keyDown"];

/* ---------- sections ---------- */

function HostChrome() {
  const h = { font: HOST_FONT, size: 14 };
  return (
    <>
      <HostTitle $h={28} $bg="#fafafa">
        <T w={357} l={537} font={HOST_FONT} size={14.5} bold color="#5c5c5c">Подготовка к Red [Работает] - Oracle VirtualBox</T>
        <Svg $l={451} width="80" height="12" viewBox="0 0 80 12">
          <path d="M1 8.500h8M35.500 2.500h7v7h-7zM69.500 2.500l7 7M76.500 2.500l-7 7" stroke="#4a4a4a" fill="none" />
        </Svg>
      </HostTitle>
      <HostMenu $h={22} $bg="#fcfcfc">
        <T {...h} w={39} l={5}>Файл</T>
        <T {...h} w={59} l={14}>Машина</T>
        <T {...h} w={29} l={14}>Вид</T>
        <T {...h} w={37} l={13}>Ввод</T>
        <T {...h} w={80} l={13}>Устройства</T>
        <T {...h} w={59} l={14}>Справка</T>
      </HostMenu>
      <Panel $h={27} $bg="#1e3036">
        <PanelPart $w={115}>
          <Icon n="xfce" l={-2} s={14} />
          <T w={90} l={3} font={HOST_FONT} size={14} color="#f0f0f0">Приложения</T>
          <Svg $l={4} width="5" height="11" viewBox="0 0 5 11"><path d="M0 1h4M0 5.500h4M0 10h4" stroke="#8a9699" /></Svg>
        </PanelPart>
        <PanelPart $w={200} $bg="linear-gradient(#454545, #2d2d2d)">
          <Icon n="terminal" l={4} />
          <TaskCount>3</TaskCount>
          <T w={56} l={8} font={HOST_FONT} size={14} color="#969696">Terminal</T>
        </PanelPart>
        <PanelPart $w={200} $bg="linear-gradient(#2a4d7c, #2d5a92 40%, #2c4666)">
          <ZapLogo w={17} l={2} />
          <T w={172} l={8} font={HOST_FONT} size={14} color="#f0f0f0">Сессия без названия - ...</T>
        </PanelPart>
        <PanelPart $w={539} />
        <PagerCurrent $w={33} $bg="#66a4e2"><ZapLogo w={17} /></PagerCurrent>
        <PagerCell $w={35} $bg="#1a1a1a" />
        <PagerCell $w={34} $bg="#1a1a1a" />
        <PanelPart $w={35} $bg="#1a1a1a" />
        <PanelPart $w={232}>
          <Icon n="volume" l={14} s={14} />
          <Icon n="battery" l={12} />
          <Icon n="bell" l={10} />
          <T w={116} l={14} font={HOST_FONT} size={14} color="#f0f0f0">Чт 26 июн, 07:08</T>
          <T w={8} l={16} font={HOST_FONT} size={14} color="#f0f0f0">s</T>
        </PanelPart>
      </Panel>
    </>
  );
}

function ZapHeader() {
  return (
    <>
      <WindowTitle $h={24}>
        <ZapLogo w={22} l={-5} />
        <T w={359} l={486} size={12} bold color="#3a3a3a" dy={-2}>Сессия без названия - 20250626-064318 - ZAP 2.16.1</T>
        <Svg $l={489} width="75" height="12" viewBox="0 0 75 12">
          <path d="M1 8.500l4-4 4 4M24 10h9M49 4h4.500v4.500H49zM70 3l6 6M76 3l-6 6" stroke="#2b2b2b" strokeWidth="2" fill="none" />
        </Svg>
      </WindowTitle>
      <MenuBar $h={24} $bg="#fff">
        <T w={36} l={3}>Файл</T>
        <T w={50} l={14}>Правка</T>
        <T w={28} l={15}>Вид</T>
        <T w={49} l={15}>Анализ</T>
        <T w={44} l={16}>Отчет</T>
        <T w={95} l={15}>Инструменты</T>
        <T w={111} l={14}>Импортировать</T>
        <T w={58} l={14}>Экспорт</T>
        <T w={51} l={16}>Онлайн</T>
        <T w={58} l={15}>Справка</T>
      </MenuBar>
      <ToolbarRow $h={24}>
        <ModeCombo $w={175} $h={21}>
          <T w={146} l={3}>Стандартный режим</T>
          <Chevron l={11} />
        </ModeCombo>
        {TOOLS.map((t, i) =>
          t === "|" ? <Divider key={i} /> : (
            <ToolCell key={i} $on={t[0] === "*"} $w={t === "cassette" ? 29 : 26}><Icon n={t.replace("*", "")} /></ToolCell>
          ),
        )}
        <ToolbarTail />
      </ToolbarRow>
    </>
  );
}

function SitesPane() {
  return (
    <Sidebar>
      <TabBar $h={34}>
        <Tab $w={83} $mark="#8fb6de" $pb={1}><Icon n="globe" l={7} /><T w={46} l={4}>Сайты</T></Tab>
        <Tab $w={109} $pb={1}><Icon n="plus" l={14} /></Tab>
      </TabBar>
      <Bar $h={34} $pb={2}>
        <Icon n="target" l={4} />
        <Icon n="winAdd" l={10} />
        <Icon n="winIn" l={10} />
        <Icon n="winOut" l={10} />
      </Bar>
      <Tree>
        <TreeRow $h={20}><Chevron l={2} color="#a9a9a9" /><Icon n="contexts" l={7} /><T w={77} l={4} dy={1}>Контексты</T></TreeRow>
        <TreeRow $h={19}><Icon n="winTarget" l={37} /><T w={137} l={4}>Контекст по умолча</T></TreeRow>
        <TreeRow $gap={2}><Chevron l={2} color="#a9a9a9" /><Icon n="globe" l={9} /><T w={45} l={6}>Сайты</T></TreeRow>
        {SITES.map(([name, w]) => (
          <TreeRow key={name}><Chevron dir="right" l={19} color="#a9a9a9" /><Icon n="folder" l={10} /><T w={w} l={6}>{name}</T></TreeRow>
        ))}
        <TreeRow>
          <Chevron dir="right" l={19} color="#a9a9a9" /><Icon n="folder" l={10} /><Icon n="flagOrange" l={4} /><T w={111} l={6}>http://127.0.0.1:8</T>
        </TreeRow>
        <ScrollTrack><ScrollThumb /></ScrollTrack>
      </Tree>
    </Sidebar>
  );
}

function QuickStart() {
  return (
    <Page>
      <Hero>
        <BackButton><T w={16} l={6} size={19} weight={400}>{"<"}</T></BackButton>
        <ZapLogo w={67} l={-2} />
        <T w={652} l={135} size={40} dy={8}>Автоматическое сканирование</T>
        <ZapLogo w={67} l={145} />
        <Brand>
          <BrandTop>
            <T w={68} font='"Open Sans", sans-serif' weight={600} size={33} color="#0a60ad">ZAP</T>
            <T w={18} l={1} font='"Open Sans", sans-serif' weight={600} size={15} color="#0a60ad" dy={16}>by</T>
          </BrandTop>
          <T w={120} l={-1} font='"Liberation Mono", monospace' size={21.500} bold color="#1a1583">Checkmarx</T>
        </Brand>
      </Hero>
      <FormRow $h={34}><T w={947} l={10}>Этот экран позволяет запустить автоматическое сканирование приложения - просто введите его URL-адрес ниже и нажмите «Атака».</T></FormRow>
      <FormRow $h={20}><T w={975} l={10}>Пожалуйста имейте в виду, что вы должны атаковать только те приложения, к которым в получили доступ специально для тестирования.</T></FormRow>
      <FormRow $h={46} />
      <FormRow $h={26}>
        <T w={105} l={45}>URL для атаки:</T>
        <UrlCombo $w={769} $l={150} $h={23}>
          <Selection><T w={135} l={0} color="#fff">http://127.0.0.1:8080</T></Selection>
          <UrlArrow><Chevron l={4} /></UrlArrow>
        </UrlCombo>
        <Button $w={122}><Icon n="globe" l={14} /><T w={74} l={4}>Выбрать...</T></Button>
      </FormRow>
      <FormRow $h={30}>
        <T w={247} l={45}>Используйте традиционного паука:</T>
        <Check><Svg $l={1} width="10" height="12" viewBox="0 0 10 12"><path d="M1 6l3 3 5-7" stroke="#a5a5a5" strokeWidth="2" fill="none" /></Svg></Check>
      </FormRow>
      <FormRow $h={32}>
        <T w={178} l={45}>Использование ajax spider</T>
        <Combo $w={94} $l={82}><T w={62} l={5}>If Modern</T><Chevron l={9} /></Combo>
        <T w={9} l={10}>с</T>
        <Combo $w={149} $l={8}><T w={44} l={5}>Firefox</T><Chevron l={82} /></Combo>
      </FormRow>
      <FormRow $h={24}>
        <T w={300} l={0}> </T>
        <Button $w={92} $off><Icon n="boltOff" l={14} /><T w={43} l={4} color="#999">Атака</T></Button>
        <Button $w={133}><Icon n="stop" l={14} /><T w={85} l={3}>Остановить</T></Button>
      </FormRow>
      <FormRow $h={26}>
        <T w={138} l={45}>Текущее состояние:</T>
        <T w={517} l={117}>Активное сканирование (атака) URL-адресов, обнаруженных пауком (-ами)</T>
      </FormRow>
    </Page>
  );
}

function BottomPane() {
  return (
    <>
      <RowGrip $row><Dot /><Dot /><Dot /></RowGrip>
      <TabBar $h={32}>
        <Tab $pb={2} $w={101}><Icon n="calendar" l={7} /><T w={59} l={4}>История</T></Tab>
        <Tab $pb={2} $w={86}><Icon n="search" l={8} /><T w={41} l={4}>Поиск</T></Tab>
        <Tab $pb={2} $w={130}><Icon n="flagRed" l={6} /><T w={88} l={4}>Оповещения</T></Tab>
        <Tab $pb={2} $w={87}><Icon n="output" l={6} /><T w={45} l={4}>Output</T></Tab>
        <Tab $pb={2} $w={71}><Icon n="spider" l={7} /><T w={33} l={4}>Паук</T></Tab>
        <Tab $pb={2} $w={255} $mark="#8fb6de">
          <Icon n="flame" l={12} /><T w={169} l={3}>Активное Сканирование</T><Icon n="pinLight" l={5} /><Icon n="closeX" l={6} />
        </Tab>
        <Tab $pb={2} $w={60}><Icon n="plus" l={14} /></Tab>
      </TabBar>
      <Bar $h={33}>
        <Icon n="sliders" l={6} />
        <Icon n="flame" l={12} />
        <T w={143} l={3}>Новое сканирование</T>
        <T w={139} l={6}>Текущее состояние:</T>
        <Combo $w={185} $l={1}><T w={152} l={6}>0: http://127.0.0.1:8080</T><Chevron l={10} /></Combo>
        <Icon n="pause" l={7} />
        <Icon n="stop" l={12} />
        <Icon n="monitor" l={12} />
        <Progress><ProgressText>48 %</ProgressText></Progress>
        <Icon n="broom" l={12} />
        <T w={162} l={6}>Текущие сканирования:</T>
        <T w={8} l={1}>1</T>
        <T w={156} l={4}>Количество Запросов:</T>
        <T w={49} l={1}>176138</T>
        <T w={144} l={3}>Новое оповещение...</T>
        <T w={9} l={0}>0</T>
        <Icon n="exportUp" l={10} />
        <T w={59} l={3}>Экспорт</T>
        <Icon n="gear" l={69} />
      </Bar>
      <ThickTabBar $h={34}>
        <Tab $w={199} $mark="#8fb6de"><T w={181} l={7} dy={1}>Отправленные сообщения</T></Tab>
        <Tab $w={300}><T w={210} l={12} dy={1}>Отфильтрованные сообщения</T></Tab>
      </ThickTabBar>
      <Table>
        <HeadRow>{HEADERS.map(([h, w]) => <HeadCell key={h}><T w={w} dy={1}>{h}</T></HeadCell>)}</HeadRow>
        <Body>
          {MESSAGES.map(([id, path, rtt, size]) => (
            <Row key={id}>
              <Cell $end><T w={52}>{`183 ${id}`}</T></Cell>
              <Cell><T w={137}>26.06.2025, 07:08:10</T></Cell>
              <Cell><T w={137}>26.06.2025, 07:08:10</T></Cell>
              <Cell><T w={27}>GET</T></Cell>
              <Cell><T w={path === "policies" ? 277 : 310}>{`http://127.0.0.1:8080/UI/ascan/view/${path}`}</T></Cell>
              <Cell $end><T w={25}>200</T></Cell>
              <Cell><T w={19}>OK</T></Cell>
              <Cell><T w={30}>{`${rtt} мс`}</T></Cell>
              <Cell><T w={62}>565 байт</T></Cell>
              <Cell><T w={74}>{`${size} байт`}</T></Cell>
            </Row>
          ))}
        </Body>
      </Table>
      <StatusBar $h={20}>
        <T w={87} l={6} dy={1}>Оповещения</T>
        <Icon n="flagRed" l={8} /><T w={9} l={3} dy={1}>0</T>
        <Icon n="flagOrange" l={10} /><T w={9} l={3} dy={1}>1</T>
        <Icon n="flagYellow" l={10} /><T w={9} l={3} dy={1}>0</T>
        <Icon n="flagBlue" l={10} /><T w={9} l={3} dy={1}>3</T>
        <Divider $h={13} $l={5} />
        <T w={218} l={0} dy={1}>Основной прокси: localhost:8080</T>
        <StatusFill><Handle /></StatusFill>
        <T w={95} l={0} dy={1}>Current Status</T>
        {SCAN_STATUS.map(([n, v], i) => (
          <React.Fragment key={n}><Icon n={n} l={i ? 10 : 4} /><T w={9} l={3} dy={1}>{v}</T></React.Fragment>
        ))}
        <Icon n="eyeGrey" l={10} />
        <T w={5} l={1}> </T>
      </StatusBar>
      <HostStatus $h={20} $bg="#fcfcfc">
        {HOST_ICONS.map((n, i) => <Icon key={n} n={n} l={i ? 3 : 1118} />)}
        <T w={86} l={3} font={HOST_FONT} size={14} color="#777">Правый Ctrl</T>
      </HostStatus>
    </>
  );
}

export default function App() {
  return (
    <Screen>
      <GlobalStyle />
      <HostChrome />
      <ZapHeader />
      <Workspace>
        <SitesPane />
        <Splitter>
          <SplitArrows><Chevron dir="left" color="#777" /><Chevron dir="right" color="#777" /></SplitArrows>
          <SplitGrip><Dot /><Dot /><Dot /></SplitGrip>
        </Splitter>
        <Main>
          <ThickTabBar $h={35}>
            <Tab $w={172} $mark="#3c83c8" $pb={1}><Icon n="bolt" l={12} /><T w={107} l={4}>Быстрый старт</T><Icon n="pin" l={5} /></Tab>
            <Tab $w={92} $pb={1}><Icon n="arrow" l={12} /><T w={49} l={3}>Запрос</T></Tab>
            <Tab $w={88} $pb={1}><Icon n="arrowLeft" l={12} /><T w={45} l={4}>Ответ</T></Tab>
            <Tab $w={92} $pb={1}><Icon n="stack" l={12} /><T w={49} l={4}>Запрос</T></Tab>
            <Tab $w={60} $pb={1}><Icon n="plus" l={14} /></Tab>
          </ThickTabBar>
          <PageFrame><QuickStart /></PageFrame>
        </Main>
      </Workspace>
      <BottomPane />
    </Screen>
  );
}
